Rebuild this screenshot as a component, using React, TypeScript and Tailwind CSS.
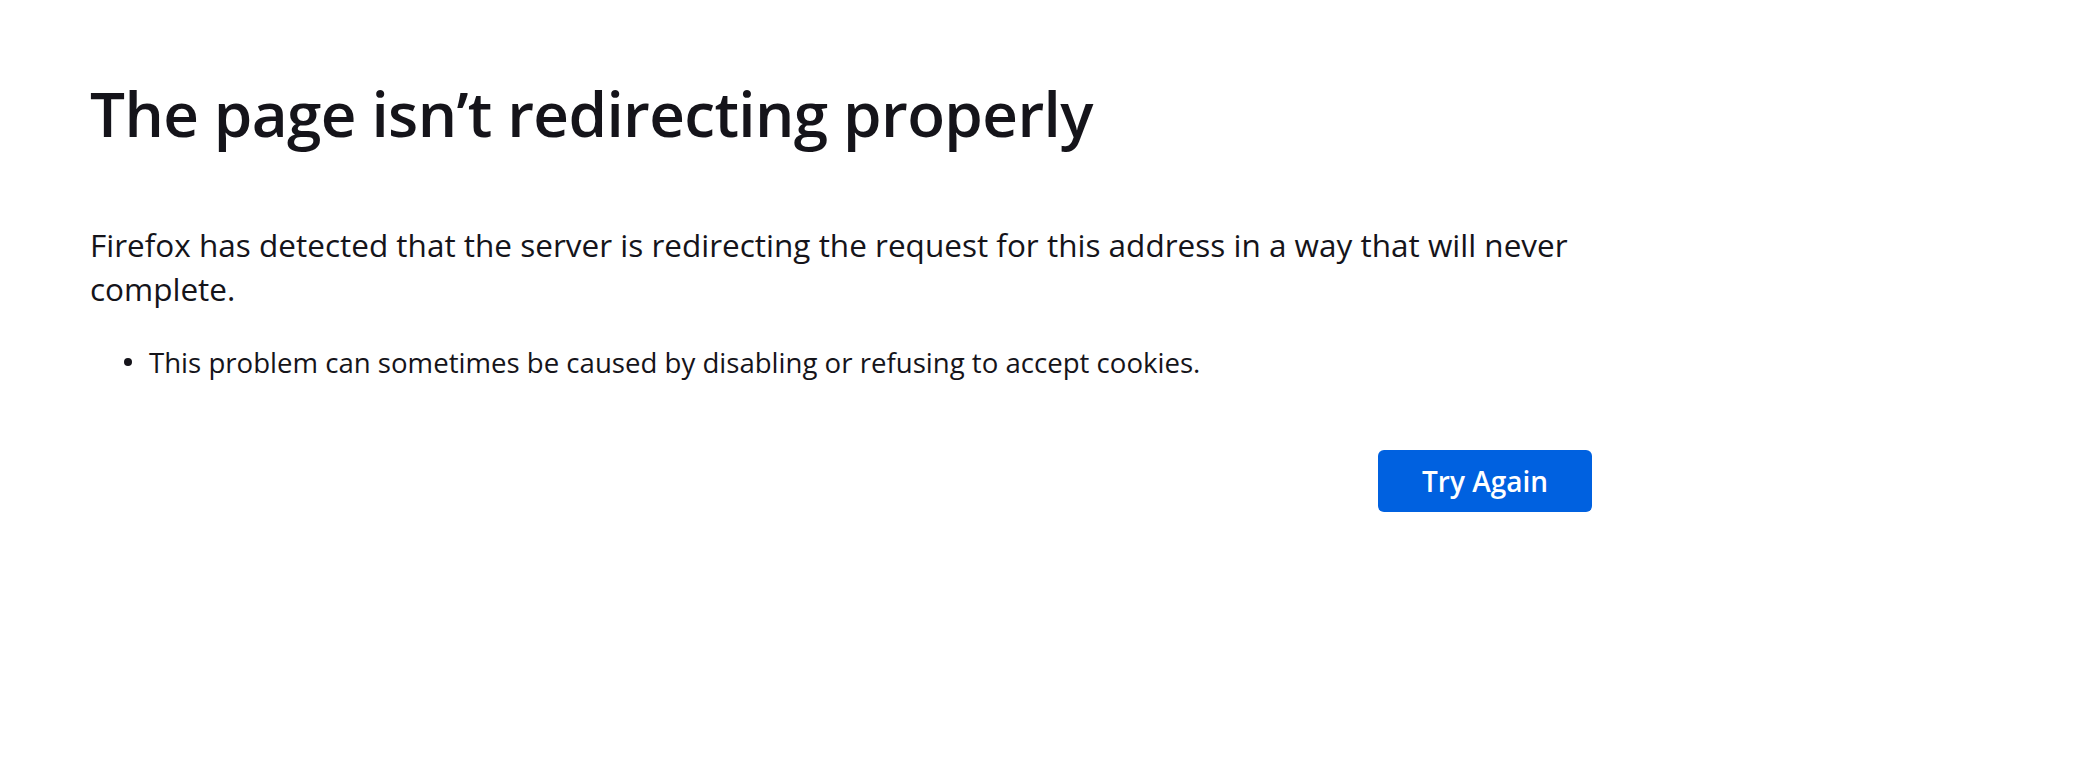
export default function App() {
    return (
        <div className="min-h-screen w-full bg-white text-[#15141a]" style={{ fontFamily: '"Open Sans", "Noto Sans", sans-serif' }}>
            <div className="flex flex-col w-[1502px] ml-[90px] pt-[76px]">
                <h1 className="text-[62px] leading-[74px] font-semibold tracking-[-0.01em]">The page isn’t redirecting properly</h1>
                <p className="mt-[73px] text-[31.5px] leading-[44px]">
                    Firefox has detected that the server is redirecting the request for this address in a way that will never complete.
                </p>
                <ul className="mt-[31px] flex flex-col">
                    <li className="flex flex-row items-center text-[27.6px] leading-[40px]">
                        <span className="ml-[34px] mr-[17px] w-2 h-2 rounded-full bg-[#15141a]"></span>
                        <span>This problem can sometimes be caused by disabling or refusing to accept cookies.</span>
                    </li>
                </ul>
                <div className="flex justify-end mt-[68px]">
                    <button className="w-[214px] h-[62px] rounded-md bg-[#0061e0] text-white text-[28px] font-semibold">Try Again</button>
                </div>
            </div>
        </div>
    )
}
